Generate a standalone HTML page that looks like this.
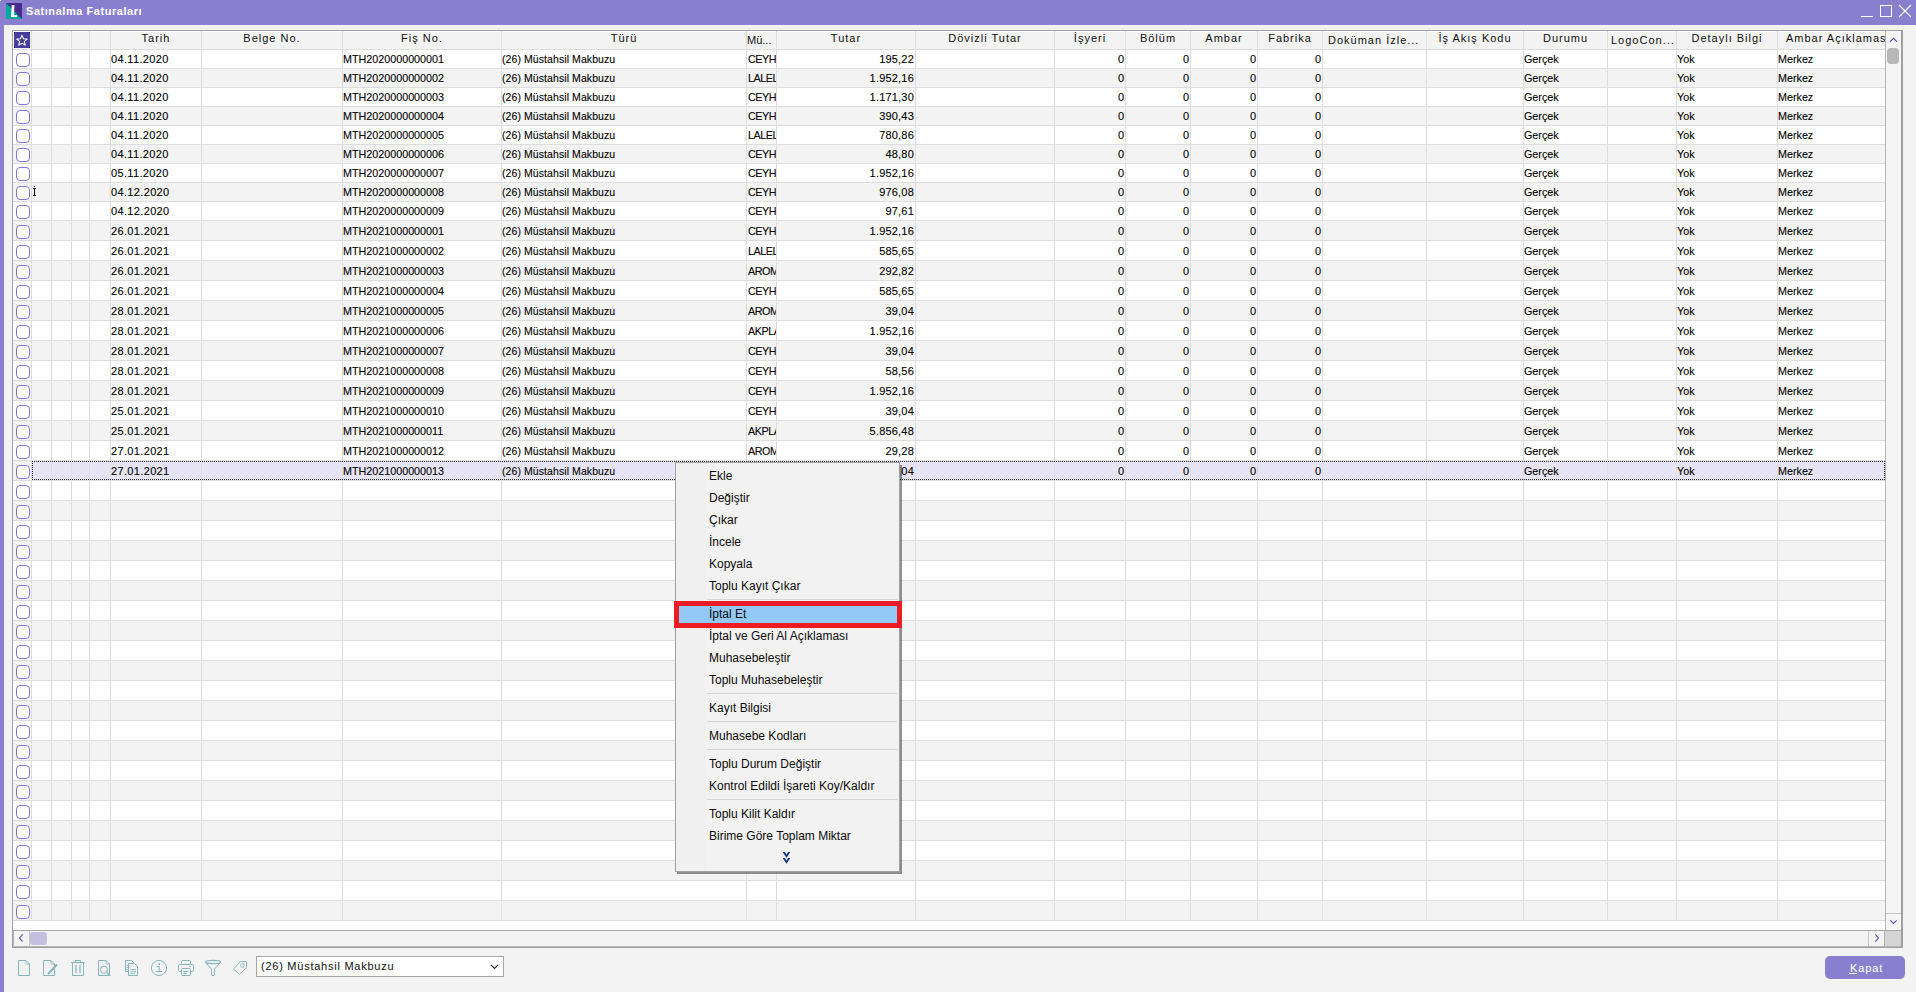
<!DOCTYPE html>
<html><head><meta charset="utf-8"><title>Satınalma Faturaları</title>
<style>
*{box-sizing:border-box;margin:0;padding:0}
html,body{width:1916px;height:992px;overflow:hidden}
body{position:relative;background:#F3F3F3;font-family:"Liberation Sans",sans-serif;color:#111}
.a{position:absolute}
.t{position:absolute;white-space:nowrap;font-size:10.75px;line-height:12px;color:#000;-webkit-text-stroke:0.1px #000}
.h{position:absolute;white-space:nowrap;font-size:11px;line-height:14px;letter-spacing:1px;color:#101010;text-align:center;top:31px}
.vl{position:absolute;width:1px;background:#DDDCE0}
.cb{position:absolute;left:16px;width:14px;height:14px;border:1px solid #8278D2;border-radius:4px;background:#fff}
.mi{position:absolute;left:33px;font-size:12px;line-height:14px;white-space:nowrap;color:#0A0A0A}
.sep{position:absolute;left:31px;width:190px;height:1px;background:#D5D5D5}
</style></head><body>

<div class="a" style="left:0;top:0;width:1916px;height:25px;background:#8A7FCF"></div>
<div class="a" style="left:0;top:0;width:4px;height:992px;background:#8A7FCF"></div>
<div class="a" style="left:0;top:0;width:1px;height:1px;background:#fff"></div>
<svg class="a" style="left:6px;top:3px" width="16" height="16" viewBox="0 0 16 16">
<rect width="16" height="16" fill="#47288F"/><polygon points="0,0 16,16 0,16" fill="#03A89C"/>
<path d="M5.7 2 H8.5 L8 12 H11 L10.9 14 H5 Z" fill="#fff"/></svg>
<div class="a" style="left:26px;top:4px;font-size:11px;letter-spacing:0.55px;line-height:14px;font-weight:bold;color:#fff;white-space:nowrap">Satınalma Faturaları</div>
<div class="a" style="left:1861px;top:16px;width:12px;height:1px;background:#fff"></div>
<div class="a" style="left:1880px;top:5px;width:12px;height:12px;border:1px solid #fff"></div>
<svg class="a" style="left:1898px;top:4px" width="14" height="14" viewBox="0 0 14 14"><path d="M1 1 L13 13 M13 1 L1 13" stroke="#fff" stroke-width="1.1"/></svg>
<div class="a" style="left:12px;top:30px;width:1891px;height:918px;border:1px solid #A0A0A0;border-right:2px solid #A0A0A0;border-bottom:2px solid #A0A0A0;background:#fff"></div>
<div class="a" style="left:13px;top:31px;width:1872px;height:899px;background:#fff"></div>
<div class="a" style="left:14px;top:32px;width:1871px;height:17px;background:#F3F3F3"></div>
<div class="a" style="left:13px;top:49px;width:1872px;height:1px;background:#DDDCE0"></div>
<div class="a" style="left:13px;top:50px;width:1872px;height:18px;background:#FFFFFF"></div>
<div class="a" style="left:13px;top:68px;width:1872px;height:1px;background:#DDDCE0"></div>
<div class="a" style="left:13px;top:69px;width:1872px;height:18px;background:#F3F3F3"></div>
<div class="a" style="left:13px;top:87px;width:1872px;height:1px;background:#DDDCE0"></div>
<div class="a" style="left:13px;top:88px;width:1872px;height:18px;background:#FFFFFF"></div>
<div class="a" style="left:13px;top:106px;width:1872px;height:1px;background:#DDDCE0"></div>
<div class="a" style="left:13px;top:107px;width:1872px;height:18px;background:#F3F3F3"></div>
<div class="a" style="left:13px;top:125px;width:1872px;height:1px;background:#DDDCE0"></div>
<div class="a" style="left:13px;top:126px;width:1872px;height:18px;background:#FFFFFF"></div>
<div class="a" style="left:13px;top:144px;width:1872px;height:1px;background:#DDDCE0"></div>
<div class="a" style="left:13px;top:145px;width:1872px;height:18px;background:#F3F3F3"></div>
<div class="a" style="left:13px;top:163px;width:1872px;height:1px;background:#DDDCE0"></div>
<div class="a" style="left:13px;top:164px;width:1872px;height:18px;background:#FFFFFF"></div>
<div class="a" style="left:13px;top:182px;width:1872px;height:1px;background:#DDDCE0"></div>
<div class="a" style="left:13px;top:183px;width:1872px;height:18px;background:#F3F3F3"></div>
<div class="a" style="left:13px;top:201px;width:1872px;height:1px;background:#DDDCE0"></div>
<div class="a" style="left:13px;top:202px;width:1872px;height:18px;background:#FFFFFF"></div>
<div class="a" style="left:13px;top:220px;width:1872px;height:1px;background:#DDDCE0"></div>
<div class="a" style="left:13px;top:221px;width:1872px;height:19px;background:#F3F3F3"></div>
<div class="a" style="left:13px;top:240px;width:1872px;height:1px;background:#DDDCE0"></div>
<div class="a" style="left:13px;top:241px;width:1872px;height:19px;background:#FFFFFF"></div>
<div class="a" style="left:13px;top:260px;width:1872px;height:1px;background:#DDDCE0"></div>
<div class="a" style="left:13px;top:261px;width:1872px;height:19px;background:#F3F3F3"></div>
<div class="a" style="left:13px;top:280px;width:1872px;height:1px;background:#DDDCE0"></div>
<div class="a" style="left:13px;top:281px;width:1872px;height:19px;background:#FFFFFF"></div>
<div class="a" style="left:13px;top:300px;width:1872px;height:1px;background:#DDDCE0"></div>
<div class="a" style="left:13px;top:301px;width:1872px;height:19px;background:#F3F3F3"></div>
<div class="a" style="left:13px;top:320px;width:1872px;height:1px;background:#DDDCE0"></div>
<div class="a" style="left:13px;top:321px;width:1872px;height:19px;background:#FFFFFF"></div>
<div class="a" style="left:13px;top:340px;width:1872px;height:1px;background:#DDDCE0"></div>
<div class="a" style="left:13px;top:341px;width:1872px;height:19px;background:#F3F3F3"></div>
<div class="a" style="left:13px;top:360px;width:1872px;height:1px;background:#DDDCE0"></div>
<div class="a" style="left:13px;top:361px;width:1872px;height:19px;background:#FFFFFF"></div>
<div class="a" style="left:13px;top:380px;width:1872px;height:1px;background:#DDDCE0"></div>
<div class="a" style="left:13px;top:381px;width:1872px;height:19px;background:#F3F3F3"></div>
<div class="a" style="left:13px;top:400px;width:1872px;height:1px;background:#DDDCE0"></div>
<div class="a" style="left:13px;top:401px;width:1872px;height:19px;background:#FFFFFF"></div>
<div class="a" style="left:13px;top:420px;width:1872px;height:1px;background:#DDDCE0"></div>
<div class="a" style="left:13px;top:421px;width:1872px;height:19px;background:#F3F3F3"></div>
<div class="a" style="left:13px;top:440px;width:1872px;height:1px;background:#DDDCE0"></div>
<div class="a" style="left:13px;top:441px;width:1872px;height:19px;background:#FFFFFF"></div>
<div class="a" style="left:13px;top:460px;width:1872px;height:1px;background:#DDDCE0"></div>
<div class="a" style="left:13px;top:461px;width:1872px;height:19px;background:#F3F3F3"></div>
<div class="a" style="left:13px;top:480px;width:1872px;height:1px;background:#DDDCE0"></div>
<div class="a" style="left:13px;top:481px;width:1872px;height:19px;background:#FFFFFF"></div>
<div class="a" style="left:13px;top:500px;width:1872px;height:1px;background:#DDDCE0"></div>
<div class="a" style="left:13px;top:501px;width:1872px;height:19px;background:#F3F3F3"></div>
<div class="a" style="left:13px;top:520px;width:1872px;height:1px;background:#DDDCE0"></div>
<div class="a" style="left:13px;top:521px;width:1872px;height:19px;background:#FFFFFF"></div>
<div class="a" style="left:13px;top:540px;width:1872px;height:1px;background:#DDDCE0"></div>
<div class="a" style="left:13px;top:541px;width:1872px;height:19px;background:#F3F3F3"></div>
<div class="a" style="left:13px;top:560px;width:1872px;height:1px;background:#DDDCE0"></div>
<div class="a" style="left:13px;top:561px;width:1872px;height:19px;background:#FFFFFF"></div>
<div class="a" style="left:13px;top:580px;width:1872px;height:1px;background:#DDDCE0"></div>
<div class="a" style="left:13px;top:581px;width:1872px;height:19px;background:#F3F3F3"></div>
<div class="a" style="left:13px;top:600px;width:1872px;height:1px;background:#DDDCE0"></div>
<div class="a" style="left:13px;top:601px;width:1872px;height:19px;background:#FFFFFF"></div>
<div class="a" style="left:13px;top:620px;width:1872px;height:1px;background:#DDDCE0"></div>
<div class="a" style="left:13px;top:621px;width:1872px;height:19px;background:#F3F3F3"></div>
<div class="a" style="left:13px;top:640px;width:1872px;height:1px;background:#DDDCE0"></div>
<div class="a" style="left:13px;top:641px;width:1872px;height:19px;background:#FFFFFF"></div>
<div class="a" style="left:13px;top:660px;width:1872px;height:1px;background:#DDDCE0"></div>
<div class="a" style="left:13px;top:661px;width:1872px;height:19px;background:#F3F3F3"></div>
<div class="a" style="left:13px;top:680px;width:1872px;height:1px;background:#DDDCE0"></div>
<div class="a" style="left:13px;top:681px;width:1872px;height:19px;background:#FFFFFF"></div>
<div class="a" style="left:13px;top:700px;width:1872px;height:1px;background:#DDDCE0"></div>
<div class="a" style="left:13px;top:701px;width:1872px;height:19px;background:#F3F3F3"></div>
<div class="a" style="left:13px;top:720px;width:1872px;height:1px;background:#DDDCE0"></div>
<div class="a" style="left:13px;top:721px;width:1872px;height:19px;background:#FFFFFF"></div>
<div class="a" style="left:13px;top:740px;width:1872px;height:1px;background:#DDDCE0"></div>
<div class="a" style="left:13px;top:741px;width:1872px;height:19px;background:#F3F3F3"></div>
<div class="a" style="left:13px;top:760px;width:1872px;height:1px;background:#DDDCE0"></div>
<div class="a" style="left:13px;top:761px;width:1872px;height:19px;background:#FFFFFF"></div>
<div class="a" style="left:13px;top:780px;width:1872px;height:1px;background:#DDDCE0"></div>
<div class="a" style="left:13px;top:781px;width:1872px;height:19px;background:#F3F3F3"></div>
<div class="a" style="left:13px;top:800px;width:1872px;height:1px;background:#DDDCE0"></div>
<div class="a" style="left:13px;top:801px;width:1872px;height:19px;background:#FFFFFF"></div>
<div class="a" style="left:13px;top:820px;width:1872px;height:1px;background:#DDDCE0"></div>
<div class="a" style="left:13px;top:821px;width:1872px;height:19px;background:#F3F3F3"></div>
<div class="a" style="left:13px;top:840px;width:1872px;height:1px;background:#DDDCE0"></div>
<div class="a" style="left:13px;top:841px;width:1872px;height:19px;background:#FFFFFF"></div>
<div class="a" style="left:13px;top:860px;width:1872px;height:1px;background:#DDDCE0"></div>
<div class="a" style="left:13px;top:861px;width:1872px;height:19px;background:#F3F3F3"></div>
<div class="a" style="left:13px;top:880px;width:1872px;height:1px;background:#DDDCE0"></div>
<div class="a" style="left:13px;top:881px;width:1872px;height:19px;background:#FFFFFF"></div>
<div class="a" style="left:13px;top:900px;width:1872px;height:1px;background:#DDDCE0"></div>
<div class="a" style="left:13px;top:901px;width:1872px;height:19px;background:#F3F3F3"></div>
<div class="a" style="left:13px;top:920px;width:1872px;height:1px;background:#DDDCE0"></div>
<div class="a" style="left:32px;top:461px;width:1853px;height:19px;background:#E7E5F5"></div>
<div class="vl" style="left:31px;top:31px;height:889px"></div>
<div class="vl" style="left:51px;top:31px;height:889px"></div>
<div class="vl" style="left:71px;top:31px;height:889px"></div>
<div class="vl" style="left:89px;top:31px;height:889px"></div>
<div class="vl" style="left:110px;top:31px;height:889px"></div>
<div class="vl" style="left:201px;top:31px;height:889px"></div>
<div class="vl" style="left:342px;top:31px;height:889px"></div>
<div class="vl" style="left:501px;top:31px;height:889px"></div>
<div class="vl" style="left:746px;top:31px;height:889px"></div>
<div class="vl" style="left:776px;top:31px;height:889px"></div>
<div class="vl" style="left:915px;top:31px;height:889px"></div>
<div class="vl" style="left:1054px;top:31px;height:889px"></div>
<div class="vl" style="left:1125px;top:31px;height:889px"></div>
<div class="vl" style="left:1190px;top:31px;height:889px"></div>
<div class="vl" style="left:1257px;top:31px;height:889px"></div>
<div class="vl" style="left:1322px;top:31px;height:889px"></div>
<div class="vl" style="left:1426px;top:31px;height:889px"></div>
<div class="vl" style="left:1523px;top:31px;height:889px"></div>
<div class="vl" style="left:1607px;top:31px;height:889px"></div>
<div class="vl" style="left:1676px;top:31px;height:889px"></div>
<div class="vl" style="left:1777px;top:31px;height:889px"></div>
<div class="a" style="left:32px;top:461px;width:1853px;height:19px;border:1px dotted #222"></div>
<div class="a" style="left:14px;top:32px;width:16px;height:16px;background:#4A3C9C"></div>
<svg class="a" style="left:14px;top:32px" width="16" height="16" viewBox="0 0 16 16"><path d="M8.00 3.20 L9.47 6.68 L13.23 7.00 L10.38 9.47 L11.23 13.15 L8.00 11.20 L4.77 13.15 L5.62 9.47 L2.77 7.00 L6.53 6.68 Z" fill="none" stroke="#fff" stroke-width="1.05" stroke-linejoin="round"/><rect x="0" y="0" width="1" height="1" fill="#000"/><rect x="15" y="0" width="1" height="1" fill="#000"/><rect x="0" y="15" width="1" height="1" fill="#000"/><rect x="15" y="15" width="1" height="1" fill="#000"/></svg>
<div class="cb" style="top:53px"></div>
<div class="cb" style="top:72px"></div>
<div class="cb" style="top:91px"></div>
<div class="cb" style="top:110px"></div>
<div class="cb" style="top:129px"></div>
<div class="cb" style="top:148px"></div>
<div class="cb" style="top:167px"></div>
<div class="cb" style="top:186px"></div>
<div class="cb" style="top:205px"></div>
<div class="cb" style="top:225px"></div>
<div class="cb" style="top:245px"></div>
<div class="cb" style="top:265px"></div>
<div class="cb" style="top:285px"></div>
<div class="cb" style="top:305px"></div>
<div class="cb" style="top:325px"></div>
<div class="cb" style="top:345px"></div>
<div class="cb" style="top:365px"></div>
<div class="cb" style="top:385px"></div>
<div class="cb" style="top:405px"></div>
<div class="cb" style="top:425px"></div>
<div class="cb" style="top:445px"></div>
<div class="cb" style="top:465px"></div>
<div class="cb" style="top:485px"></div>
<div class="cb" style="top:505px"></div>
<div class="cb" style="top:525px"></div>
<div class="cb" style="top:545px"></div>
<div class="cb" style="top:565px"></div>
<div class="cb" style="top:585px"></div>
<div class="cb" style="top:605px"></div>
<div class="cb" style="top:625px"></div>
<div class="cb" style="top:645px"></div>
<div class="cb" style="top:665px"></div>
<div class="cb" style="top:685px"></div>
<div class="cb" style="top:705px"></div>
<div class="cb" style="top:725px"></div>
<div class="cb" style="top:745px"></div>
<div class="cb" style="top:765px"></div>
<div class="cb" style="top:785px"></div>
<div class="cb" style="top:805px"></div>
<div class="cb" style="top:825px"></div>
<div class="cb" style="top:845px"></div>
<div class="cb" style="top:865px"></div>
<div class="cb" style="top:885px"></div>
<div class="cb" style="top:905px"></div>
<div class="h" style="left:111px;width:90px;">Tarih</div>
<div class="h" style="left:202px;width:140px;">Belge No.</div>
<div class="h" style="left:343px;width:158px;">Fiş No.</div>
<div class="h" style="left:502px;width:244px;">Türü</div>
<div class="h" style="left:747px;top:33px;text-align:left;letter-spacing:0">Mü...</div>
<div class="h" style="left:777px;width:138px;">Tutar</div>
<div class="h" style="left:916px;width:138px;">Dövizli Tutar</div>
<div class="h" style="left:1055px;width:70px;">İşyeri</div>
<div class="h" style="left:1126px;width:64px;">Bölüm</div>
<div class="h" style="left:1191px;width:66px;">Ambar</div>
<div class="h" style="left:1258px;width:64px;">Fabrika</div>
<div class="h" style="left:1328px;top:33px;text-align:left">Doküman İzle...</div>
<div class="h" style="left:1427px;width:96px;">İş Akış Kodu</div>
<div class="h" style="left:1524px;width:83px;">Durumu</div>
<div class="h" style="left:1611px;top:33px;text-align:left">LogoCon...</div>
<div class="h" style="left:1677px;width:100px;">Detaylı Bilgi</div>
<div class="a" style="left:1778px;top:31px;width:107px;height:18px;overflow:hidden"><div class="h" style="left:8px;top:0px;text-align:left">Ambar Açıklaması</div></div>
<div class="t" style="left:111px;top:53px;font-size:11px;letter-spacing:0.35px">04.11.2020</div>
<div class="t" style="left:343px;top:53px">MTH2020000000001</div>
<div class="t" style="left:502px;top:53px;font-size:10.5px;letter-spacing:0.08px">(26) Müstahsil Makbuzu</div>
<div class="a" style="left:747px;top:50px;width:29px;height:18px;overflow:hidden"><div class="t" style="left:1px;top:3px;letter-spacing:-0.45px">CEYH.</div></div>
<div class="t" style="left:777px;width:137px;text-align:right;top:53px;font-size:11px;letter-spacing:0.2px">195,22</div>
<div class="t" style="left:1055px;width:69px;text-align:right;top:53px;font-size:11px">0</div>
<div class="t" style="left:1126px;width:63px;text-align:right;top:53px;font-size:11px">0</div>
<div class="t" style="left:1191px;width:65px;text-align:right;top:53px;font-size:11px">0</div>
<div class="t" style="left:1258px;width:63px;text-align:right;top:53px;font-size:11px">0</div>
<div class="t" style="left:1524px;top:53px">Gerçek</div>
<div class="t" style="left:1677px;top:53px">Yok</div>
<div class="t" style="left:1778px;top:53px">Merkez</div>
<div class="t" style="left:111px;top:72px;font-size:11px;letter-spacing:0.35px">04.11.2020</div>
<div class="t" style="left:343px;top:72px">MTH2020000000002</div>
<div class="t" style="left:502px;top:72px;font-size:10.5px;letter-spacing:0.08px">(26) Müstahsil Makbuzu</div>
<div class="a" style="left:747px;top:69px;width:29px;height:18px;overflow:hidden"><div class="t" style="left:1px;top:3px;letter-spacing:-0.45px">LALEL</div></div>
<div class="t" style="left:777px;width:137px;text-align:right;top:72px;font-size:11px;letter-spacing:0.2px">1.952,16</div>
<div class="t" style="left:1055px;width:69px;text-align:right;top:72px;font-size:11px">0</div>
<div class="t" style="left:1126px;width:63px;text-align:right;top:72px;font-size:11px">0</div>
<div class="t" style="left:1191px;width:65px;text-align:right;top:72px;font-size:11px">0</div>
<div class="t" style="left:1258px;width:63px;text-align:right;top:72px;font-size:11px">0</div>
<div class="t" style="left:1524px;top:72px">Gerçek</div>
<div class="t" style="left:1677px;top:72px">Yok</div>
<div class="t" style="left:1778px;top:72px">Merkez</div>
<div class="t" style="left:111px;top:91px;font-size:11px;letter-spacing:0.35px">04.11.2020</div>
<div class="t" style="left:343px;top:91px">MTH2020000000003</div>
<div class="t" style="left:502px;top:91px;font-size:10.5px;letter-spacing:0.08px">(26) Müstahsil Makbuzu</div>
<div class="a" style="left:747px;top:88px;width:29px;height:18px;overflow:hidden"><div class="t" style="left:1px;top:3px;letter-spacing:-0.45px">CEYH.</div></div>
<div class="t" style="left:777px;width:137px;text-align:right;top:91px;font-size:11px;letter-spacing:0.2px">1.171,30</div>
<div class="t" style="left:1055px;width:69px;text-align:right;top:91px;font-size:11px">0</div>
<div class="t" style="left:1126px;width:63px;text-align:right;top:91px;font-size:11px">0</div>
<div class="t" style="left:1191px;width:65px;text-align:right;top:91px;font-size:11px">0</div>
<div class="t" style="left:1258px;width:63px;text-align:right;top:91px;font-size:11px">0</div>
<div class="t" style="left:1524px;top:91px">Gerçek</div>
<div class="t" style="left:1677px;top:91px">Yok</div>
<div class="t" style="left:1778px;top:91px">Merkez</div>
<div class="t" style="left:111px;top:110px;font-size:11px;letter-spacing:0.35px">04.11.2020</div>
<div class="t" style="left:343px;top:110px">MTH2020000000004</div>
<div class="t" style="left:502px;top:110px;font-size:10.5px;letter-spacing:0.08px">(26) Müstahsil Makbuzu</div>
<div class="a" style="left:747px;top:107px;width:29px;height:18px;overflow:hidden"><div class="t" style="left:1px;top:3px;letter-spacing:-0.45px">CEYH.</div></div>
<div class="t" style="left:777px;width:137px;text-align:right;top:110px;font-size:11px;letter-spacing:0.2px">390,43</div>
<div class="t" style="left:1055px;width:69px;text-align:right;top:110px;font-size:11px">0</div>
<div class="t" style="left:1126px;width:63px;text-align:right;top:110px;font-size:11px">0</div>
<div class="t" style="left:1191px;width:65px;text-align:right;top:110px;font-size:11px">0</div>
<div class="t" style="left:1258px;width:63px;text-align:right;top:110px;font-size:11px">0</div>
<div class="t" style="left:1524px;top:110px">Gerçek</div>
<div class="t" style="left:1677px;top:110px">Yok</div>
<div class="t" style="left:1778px;top:110px">Merkez</div>
<div class="t" style="left:111px;top:129px;font-size:11px;letter-spacing:0.35px">04.11.2020</div>
<div class="t" style="left:343px;top:129px">MTH2020000000005</div>
<div class="t" style="left:502px;top:129px;font-size:10.5px;letter-spacing:0.08px">(26) Müstahsil Makbuzu</div>
<div class="a" style="left:747px;top:126px;width:29px;height:18px;overflow:hidden"><div class="t" style="left:1px;top:3px;letter-spacing:-0.45px">LALEL</div></div>
<div class="t" style="left:777px;width:137px;text-align:right;top:129px;font-size:11px;letter-spacing:0.2px">780,86</div>
<div class="t" style="left:1055px;width:69px;text-align:right;top:129px;font-size:11px">0</div>
<div class="t" style="left:1126px;width:63px;text-align:right;top:129px;font-size:11px">0</div>
<div class="t" style="left:1191px;width:65px;text-align:right;top:129px;font-size:11px">0</div>
<div class="t" style="left:1258px;width:63px;text-align:right;top:129px;font-size:11px">0</div>
<div class="t" style="left:1524px;top:129px">Gerçek</div>
<div class="t" style="left:1677px;top:129px">Yok</div>
<div class="t" style="left:1778px;top:129px">Merkez</div>
<div class="t" style="left:111px;top:148px;font-size:11px;letter-spacing:0.35px">04.11.2020</div>
<div class="t" style="left:343px;top:148px">MTH2020000000006</div>
<div class="t" style="left:502px;top:148px;font-size:10.5px;letter-spacing:0.08px">(26) Müstahsil Makbuzu</div>
<div class="a" style="left:747px;top:145px;width:29px;height:18px;overflow:hidden"><div class="t" style="left:1px;top:3px;letter-spacing:-0.45px">CEYH.</div></div>
<div class="t" style="left:777px;width:137px;text-align:right;top:148px;font-size:11px;letter-spacing:0.2px">48,80</div>
<div class="t" style="left:1055px;width:69px;text-align:right;top:148px;font-size:11px">0</div>
<div class="t" style="left:1126px;width:63px;text-align:right;top:148px;font-size:11px">0</div>
<div class="t" style="left:1191px;width:65px;text-align:right;top:148px;font-size:11px">0</div>
<div class="t" style="left:1258px;width:63px;text-align:right;top:148px;font-size:11px">0</div>
<div class="t" style="left:1524px;top:148px">Gerçek</div>
<div class="t" style="left:1677px;top:148px">Yok</div>
<div class="t" style="left:1778px;top:148px">Merkez</div>
<div class="t" style="left:111px;top:167px;font-size:11px;letter-spacing:0.35px">05.11.2020</div>
<div class="t" style="left:343px;top:167px">MTH2020000000007</div>
<div class="t" style="left:502px;top:167px;font-size:10.5px;letter-spacing:0.08px">(26) Müstahsil Makbuzu</div>
<div class="a" style="left:747px;top:164px;width:29px;height:18px;overflow:hidden"><div class="t" style="left:1px;top:3px;letter-spacing:-0.45px">CEYH.</div></div>
<div class="t" style="left:777px;width:137px;text-align:right;top:167px;font-size:11px;letter-spacing:0.2px">1.952,16</div>
<div class="t" style="left:1055px;width:69px;text-align:right;top:167px;font-size:11px">0</div>
<div class="t" style="left:1126px;width:63px;text-align:right;top:167px;font-size:11px">0</div>
<div class="t" style="left:1191px;width:65px;text-align:right;top:167px;font-size:11px">0</div>
<div class="t" style="left:1258px;width:63px;text-align:right;top:167px;font-size:11px">0</div>
<div class="t" style="left:1524px;top:167px">Gerçek</div>
<div class="t" style="left:1677px;top:167px">Yok</div>
<div class="t" style="left:1778px;top:167px">Merkez</div>
<div class="t" style="left:111px;top:186px;font-size:11px;letter-spacing:0.35px">04.12.2020</div>
<div class="t" style="left:343px;top:186px">MTH2020000000008</div>
<div class="t" style="left:502px;top:186px;font-size:10.5px;letter-spacing:0.08px">(26) Müstahsil Makbuzu</div>
<div class="a" style="left:747px;top:183px;width:29px;height:18px;overflow:hidden"><div class="t" style="left:1px;top:3px;letter-spacing:-0.45px">CEYH.</div></div>
<div class="t" style="left:777px;width:137px;text-align:right;top:186px;font-size:11px;letter-spacing:0.2px">976,08</div>
<div class="t" style="left:1055px;width:69px;text-align:right;top:186px;font-size:11px">0</div>
<div class="t" style="left:1126px;width:63px;text-align:right;top:186px;font-size:11px">0</div>
<div class="t" style="left:1191px;width:65px;text-align:right;top:186px;font-size:11px">0</div>
<div class="t" style="left:1258px;width:63px;text-align:right;top:186px;font-size:11px">0</div>
<div class="t" style="left:1524px;top:186px">Gerçek</div>
<div class="t" style="left:1677px;top:186px">Yok</div>
<div class="t" style="left:1778px;top:186px">Merkez</div>
<div class="a" style="left:34px;top:186px;width:1px;height:1px;background:#111"></div><div class="a" style="left:33px;top:188px;width:3px;height:1px;background:#111"></div><div class="a" style="left:34px;top:189px;width:1px;height:6px;background:#111"></div><div class="a" style="left:33px;top:195px;width:3px;height:1px;background:#111"></div>
<div class="t" style="left:111px;top:205px;font-size:11px;letter-spacing:0.35px">04.12.2020</div>
<div class="t" style="left:343px;top:205px">MTH2020000000009</div>
<div class="t" style="left:502px;top:205px;font-size:10.5px;letter-spacing:0.08px">(26) Müstahsil Makbuzu</div>
<div class="a" style="left:747px;top:202px;width:29px;height:18px;overflow:hidden"><div class="t" style="left:1px;top:3px;letter-spacing:-0.45px">CEYH.</div></div>
<div class="t" style="left:777px;width:137px;text-align:right;top:205px;font-size:11px;letter-spacing:0.2px">97,61</div>
<div class="t" style="left:1055px;width:69px;text-align:right;top:205px;font-size:11px">0</div>
<div class="t" style="left:1126px;width:63px;text-align:right;top:205px;font-size:11px">0</div>
<div class="t" style="left:1191px;width:65px;text-align:right;top:205px;font-size:11px">0</div>
<div class="t" style="left:1258px;width:63px;text-align:right;top:205px;font-size:11px">0</div>
<div class="t" style="left:1524px;top:205px">Gerçek</div>
<div class="t" style="left:1677px;top:205px">Yok</div>
<div class="t" style="left:1778px;top:205px">Merkez</div>
<div class="t" style="left:111px;top:225px;font-size:11px;letter-spacing:0.35px">26.01.2021</div>
<div class="t" style="left:343px;top:225px">MTH2021000000001</div>
<div class="t" style="left:502px;top:225px;font-size:10.5px;letter-spacing:0.08px">(26) Müstahsil Makbuzu</div>
<div class="a" style="left:747px;top:221px;width:29px;height:19px;overflow:hidden"><div class="t" style="left:1px;top:4px;letter-spacing:-0.45px">CEYH.</div></div>
<div class="t" style="left:777px;width:137px;text-align:right;top:225px;font-size:11px;letter-spacing:0.2px">1.952,16</div>
<div class="t" style="left:1055px;width:69px;text-align:right;top:225px;font-size:11px">0</div>
<div class="t" style="left:1126px;width:63px;text-align:right;top:225px;font-size:11px">0</div>
<div class="t" style="left:1191px;width:65px;text-align:right;top:225px;font-size:11px">0</div>
<div class="t" style="left:1258px;width:63px;text-align:right;top:225px;font-size:11px">0</div>
<div class="t" style="left:1524px;top:225px">Gerçek</div>
<div class="t" style="left:1677px;top:225px">Yok</div>
<div class="t" style="left:1778px;top:225px">Merkez</div>
<div class="t" style="left:111px;top:245px;font-size:11px;letter-spacing:0.35px">26.01.2021</div>
<div class="t" style="left:343px;top:245px">MTH2021000000002</div>
<div class="t" style="left:502px;top:245px;font-size:10.5px;letter-spacing:0.08px">(26) Müstahsil Makbuzu</div>
<div class="a" style="left:747px;top:241px;width:29px;height:19px;overflow:hidden"><div class="t" style="left:1px;top:4px;letter-spacing:-0.45px">LALEL</div></div>
<div class="t" style="left:777px;width:137px;text-align:right;top:245px;font-size:11px;letter-spacing:0.2px">585,65</div>
<div class="t" style="left:1055px;width:69px;text-align:right;top:245px;font-size:11px">0</div>
<div class="t" style="left:1126px;width:63px;text-align:right;top:245px;font-size:11px">0</div>
<div class="t" style="left:1191px;width:65px;text-align:right;top:245px;font-size:11px">0</div>
<div class="t" style="left:1258px;width:63px;text-align:right;top:245px;font-size:11px">0</div>
<div class="t" style="left:1524px;top:245px">Gerçek</div>
<div class="t" style="left:1677px;top:245px">Yok</div>
<div class="t" style="left:1778px;top:245px">Merkez</div>
<div class="t" style="left:111px;top:265px;font-size:11px;letter-spacing:0.35px">26.01.2021</div>
<div class="t" style="left:343px;top:265px">MTH2021000000003</div>
<div class="t" style="left:502px;top:265px;font-size:10.5px;letter-spacing:0.08px">(26) Müstahsil Makbuzu</div>
<div class="a" style="left:747px;top:261px;width:29px;height:19px;overflow:hidden"><div class="t" style="left:1px;top:4px;letter-spacing:-0.45px">AROM</div></div>
<div class="t" style="left:777px;width:137px;text-align:right;top:265px;font-size:11px;letter-spacing:0.2px">292,82</div>
<div class="t" style="left:1055px;width:69px;text-align:right;top:265px;font-size:11px">0</div>
<div class="t" style="left:1126px;width:63px;text-align:right;top:265px;font-size:11px">0</div>
<div class="t" style="left:1191px;width:65px;text-align:right;top:265px;font-size:11px">0</div>
<div class="t" style="left:1258px;width:63px;text-align:right;top:265px;font-size:11px">0</div>
<div class="t" style="left:1524px;top:265px">Gerçek</div>
<div class="t" style="left:1677px;top:265px">Yok</div>
<div class="t" style="left:1778px;top:265px">Merkez</div>
<div class="t" style="left:111px;top:285px;font-size:11px;letter-spacing:0.35px">26.01.2021</div>
<div class="t" style="left:343px;top:285px">MTH2021000000004</div>
<div class="t" style="left:502px;top:285px;font-size:10.5px;letter-spacing:0.08px">(26) Müstahsil Makbuzu</div>
<div class="a" style="left:747px;top:281px;width:29px;height:19px;overflow:hidden"><div class="t" style="left:1px;top:4px;letter-spacing:-0.45px">CEYH.</div></div>
<div class="t" style="left:777px;width:137px;text-align:right;top:285px;font-size:11px;letter-spacing:0.2px">585,65</div>
<div class="t" style="left:1055px;width:69px;text-align:right;top:285px;font-size:11px">0</div>
<div class="t" style="left:1126px;width:63px;text-align:right;top:285px;font-size:11px">0</div>
<div class="t" style="left:1191px;width:65px;text-align:right;top:285px;font-size:11px">0</div>
<div class="t" style="left:1258px;width:63px;text-align:right;top:285px;font-size:11px">0</div>
<div class="t" style="left:1524px;top:285px">Gerçek</div>
<div class="t" style="left:1677px;top:285px">Yok</div>
<div class="t" style="left:1778px;top:285px">Merkez</div>
<div class="t" style="left:111px;top:305px;font-size:11px;letter-spacing:0.35px">28.01.2021</div>
<div class="t" style="left:343px;top:305px">MTH2021000000005</div>
<div class="t" style="left:502px;top:305px;font-size:10.5px;letter-spacing:0.08px">(26) Müstahsil Makbuzu</div>
<div class="a" style="left:747px;top:301px;width:29px;height:19px;overflow:hidden"><div class="t" style="left:1px;top:4px;letter-spacing:-0.45px">AROM</div></div>
<div class="t" style="left:777px;width:137px;text-align:right;top:305px;font-size:11px;letter-spacing:0.2px">39,04</div>
<div class="t" style="left:1055px;width:69px;text-align:right;top:305px;font-size:11px">0</div>
<div class="t" style="left:1126px;width:63px;text-align:right;top:305px;font-size:11px">0</div>
<div class="t" style="left:1191px;width:65px;text-align:right;top:305px;font-size:11px">0</div>
<div class="t" style="left:1258px;width:63px;text-align:right;top:305px;font-size:11px">0</div>
<div class="t" style="left:1524px;top:305px">Gerçek</div>
<div class="t" style="left:1677px;top:305px">Yok</div>
<div class="t" style="left:1778px;top:305px">Merkez</div>
<div class="t" style="left:111px;top:325px;font-size:11px;letter-spacing:0.35px">28.01.2021</div>
<div class="t" style="left:343px;top:325px">MTH2021000000006</div>
<div class="t" style="left:502px;top:325px;font-size:10.5px;letter-spacing:0.08px">(26) Müstahsil Makbuzu</div>
<div class="a" style="left:747px;top:321px;width:29px;height:19px;overflow:hidden"><div class="t" style="left:1px;top:4px;letter-spacing:-0.45px">AKPLA</div></div>
<div class="t" style="left:777px;width:137px;text-align:right;top:325px;font-size:11px;letter-spacing:0.2px">1.952,16</div>
<div class="t" style="left:1055px;width:69px;text-align:right;top:325px;font-size:11px">0</div>
<div class="t" style="left:1126px;width:63px;text-align:right;top:325px;font-size:11px">0</div>
<div class="t" style="left:1191px;width:65px;text-align:right;top:325px;font-size:11px">0</div>
<div class="t" style="left:1258px;width:63px;text-align:right;top:325px;font-size:11px">0</div>
<div class="t" style="left:1524px;top:325px">Gerçek</div>
<div class="t" style="left:1677px;top:325px">Yok</div>
<div class="t" style="left:1778px;top:325px">Merkez</div>
<div class="t" style="left:111px;top:345px;font-size:11px;letter-spacing:0.35px">28.01.2021</div>
<div class="t" style="left:343px;top:345px">MTH2021000000007</div>
<div class="t" style="left:502px;top:345px;font-size:10.5px;letter-spacing:0.08px">(26) Müstahsil Makbuzu</div>
<div class="a" style="left:747px;top:341px;width:29px;height:19px;overflow:hidden"><div class="t" style="left:1px;top:4px;letter-spacing:-0.45px">CEYH.</div></div>
<div class="t" style="left:777px;width:137px;text-align:right;top:345px;font-size:11px;letter-spacing:0.2px">39,04</div>
<div class="t" style="left:1055px;width:69px;text-align:right;top:345px;font-size:11px">0</div>
<div class="t" style="left:1126px;width:63px;text-align:right;top:345px;font-size:11px">0</div>
<div class="t" style="left:1191px;width:65px;text-align:right;top:345px;font-size:11px">0</div>
<div class="t" style="left:1258px;width:63px;text-align:right;top:345px;font-size:11px">0</div>
<div class="t" style="left:1524px;top:345px">Gerçek</div>
<div class="t" style="left:1677px;top:345px">Yok</div>
<div class="t" style="left:1778px;top:345px">Merkez</div>
<div class="t" style="left:111px;top:365px;font-size:11px;letter-spacing:0.35px">28.01.2021</div>
<div class="t" style="left:343px;top:365px">MTH2021000000008</div>
<div class="t" style="left:502px;top:365px;font-size:10.5px;letter-spacing:0.08px">(26) Müstahsil Makbuzu</div>
<div class="a" style="left:747px;top:361px;width:29px;height:19px;overflow:hidden"><div class="t" style="left:1px;top:4px;letter-spacing:-0.45px">CEYH.</div></div>
<div class="t" style="left:777px;width:137px;text-align:right;top:365px;font-size:11px;letter-spacing:0.2px">58,56</div>
<div class="t" style="left:1055px;width:69px;text-align:right;top:365px;font-size:11px">0</div>
<div class="t" style="left:1126px;width:63px;text-align:right;top:365px;font-size:11px">0</div>
<div class="t" style="left:1191px;width:65px;text-align:right;top:365px;font-size:11px">0</div>
<div class="t" style="left:1258px;width:63px;text-align:right;top:365px;font-size:11px">0</div>
<div class="t" style="left:1524px;top:365px">Gerçek</div>
<div class="t" style="left:1677px;top:365px">Yok</div>
<div class="t" style="left:1778px;top:365px">Merkez</div>
<div class="t" style="left:111px;top:385px;font-size:11px;letter-spacing:0.35px">28.01.2021</div>
<div class="t" style="left:343px;top:385px">MTH2021000000009</div>
<div class="t" style="left:502px;top:385px;font-size:10.5px;letter-spacing:0.08px">(26) Müstahsil Makbuzu</div>
<div class="a" style="left:747px;top:381px;width:29px;height:19px;overflow:hidden"><div class="t" style="left:1px;top:4px;letter-spacing:-0.45px">CEYH.</div></div>
<div class="t" style="left:777px;width:137px;text-align:right;top:385px;font-size:11px;letter-spacing:0.2px">1.952,16</div>
<div class="t" style="left:1055px;width:69px;text-align:right;top:385px;font-size:11px">0</div>
<div class="t" style="left:1126px;width:63px;text-align:right;top:385px;font-size:11px">0</div>
<div class="t" style="left:1191px;width:65px;text-align:right;top:385px;font-size:11px">0</div>
<div class="t" style="left:1258px;width:63px;text-align:right;top:385px;font-size:11px">0</div>
<div class="t" style="left:1524px;top:385px">Gerçek</div>
<div class="t" style="left:1677px;top:385px">Yok</div>
<div class="t" style="left:1778px;top:385px">Merkez</div>
<div class="t" style="left:111px;top:405px;font-size:11px;letter-spacing:0.35px">25.01.2021</div>
<div class="t" style="left:343px;top:405px">MTH2021000000010</div>
<div class="t" style="left:502px;top:405px;font-size:10.5px;letter-spacing:0.08px">(26) Müstahsil Makbuzu</div>
<div class="a" style="left:747px;top:401px;width:29px;height:19px;overflow:hidden"><div class="t" style="left:1px;top:4px;letter-spacing:-0.45px">CEYH.</div></div>
<div class="t" style="left:777px;width:137px;text-align:right;top:405px;font-size:11px;letter-spacing:0.2px">39,04</div>
<div class="t" style="left:1055px;width:69px;text-align:right;top:405px;font-size:11px">0</div>
<div class="t" style="left:1126px;width:63px;text-align:right;top:405px;font-size:11px">0</div>
<div class="t" style="left:1191px;width:65px;text-align:right;top:405px;font-size:11px">0</div>
<div class="t" style="left:1258px;width:63px;text-align:right;top:405px;font-size:11px">0</div>
<div class="t" style="left:1524px;top:405px">Gerçek</div>
<div class="t" style="left:1677px;top:405px">Yok</div>
<div class="t" style="left:1778px;top:405px">Merkez</div>
<div class="t" style="left:111px;top:425px;font-size:11px;letter-spacing:0.35px">25.01.2021</div>
<div class="t" style="left:343px;top:425px">MTH2021000000011</div>
<div class="t" style="left:502px;top:425px;font-size:10.5px;letter-spacing:0.08px">(26) Müstahsil Makbuzu</div>
<div class="a" style="left:747px;top:421px;width:29px;height:19px;overflow:hidden"><div class="t" style="left:1px;top:4px;letter-spacing:-0.45px">AKPLA</div></div>
<div class="t" style="left:777px;width:137px;text-align:right;top:425px;font-size:11px;letter-spacing:0.2px">5.856,48</div>
<div class="t" style="left:1055px;width:69px;text-align:right;top:425px;font-size:11px">0</div>
<div class="t" style="left:1126px;width:63px;text-align:right;top:425px;font-size:11px">0</div>
<div class="t" style="left:1191px;width:65px;text-align:right;top:425px;font-size:11px">0</div>
<div class="t" style="left:1258px;width:63px;text-align:right;top:425px;font-size:11px">0</div>
<div class="t" style="left:1524px;top:425px">Gerçek</div>
<div class="t" style="left:1677px;top:425px">Yok</div>
<div class="t" style="left:1778px;top:425px">Merkez</div>
<div class="t" style="left:111px;top:445px;font-size:11px;letter-spacing:0.35px">27.01.2021</div>
<div class="t" style="left:343px;top:445px">MTH2021000000012</div>
<div class="t" style="left:502px;top:445px;font-size:10.5px;letter-spacing:0.08px">(26) Müstahsil Makbuzu</div>
<div class="a" style="left:747px;top:441px;width:29px;height:19px;overflow:hidden"><div class="t" style="left:1px;top:4px;letter-spacing:-0.45px">AROM</div></div>
<div class="t" style="left:777px;width:137px;text-align:right;top:445px;font-size:11px;letter-spacing:0.2px">29,28</div>
<div class="t" style="left:1055px;width:69px;text-align:right;top:445px;font-size:11px">0</div>
<div class="t" style="left:1126px;width:63px;text-align:right;top:445px;font-size:11px">0</div>
<div class="t" style="left:1191px;width:65px;text-align:right;top:445px;font-size:11px">0</div>
<div class="t" style="left:1258px;width:63px;text-align:right;top:445px;font-size:11px">0</div>
<div class="t" style="left:1524px;top:445px">Gerçek</div>
<div class="t" style="left:1677px;top:445px">Yok</div>
<div class="t" style="left:1778px;top:445px">Merkez</div>
<div class="t" style="left:111px;top:465px;font-size:11px;letter-spacing:0.35px">27.01.2021</div>
<div class="t" style="left:343px;top:465px">MTH2021000000013</div>
<div class="t" style="left:502px;top:465px;font-size:10.5px;letter-spacing:0.08px">(26) Müstahsil Makbuzu</div>
<div class="a" style="left:747px;top:461px;width:29px;height:19px;overflow:hidden"><div class="t" style="left:1px;top:4px;letter-spacing:-0.45px">CEYH.</div></div>
<div class="t" style="left:777px;width:137px;text-align:right;top:465px;font-size:11px;letter-spacing:0.2px">39,04</div>
<div class="t" style="left:1055px;width:69px;text-align:right;top:465px;font-size:11px">0</div>
<div class="t" style="left:1126px;width:63px;text-align:right;top:465px;font-size:11px">0</div>
<div class="t" style="left:1191px;width:65px;text-align:right;top:465px;font-size:11px">0</div>
<div class="t" style="left:1258px;width:63px;text-align:right;top:465px;font-size:11px">0</div>
<div class="t" style="left:1524px;top:465px">Gerçek</div>
<div class="t" style="left:1677px;top:465px">Yok</div>
<div class="t" style="left:1778px;top:465px">Merkez</div>
<div class="a" style="left:1885px;top:31px;width:1px;height:899px;background:#B4B4B4"></div>
<div class="a" style="left:1886px;top:31px;width:15px;height:899px;background:#F5F5F5"></div>
<svg class="a" style="left:1886px;top:33px" width="15" height="12" viewBox="0 0 15 12"><path d="M4 8.8 L7.5 5.3 L11 8.8" fill="none" stroke="#5E50B8" stroke-width="1.15"/></svg>
<div class="a" style="left:1887px;top:48px;width:12px;height:16px;background:#B8B8B8;border-radius:4px"></div>
<div class="a" style="left:1886px;top:913px;width:15px;height:1px;background:#C8C8C8"></div>
<svg class="a" style="left:1886px;top:915px" width="15" height="12" viewBox="0 0 15 12"><path d="M4.3 5.3 L7.5 8.5 L10.7 5.3" fill="none" stroke="#5E50B8" stroke-width="1.15"/></svg>
<div class="a" style="left:13px;top:930px;width:1888px;height:1px;background:#A8A8A8"></div>
<div class="a" style="left:13px;top:931px;width:1872px;height:15px;background:#F3F3F3"></div>
<div class="a" style="left:29px;top:931px;width:1px;height:15px;background:#C8C8C8"></div>
<svg class="a" style="left:13px;top:931px" width="16" height="15" viewBox="0 0 16 15"><path d="M9.6 3.4 L6.6 7 L9.6 10.6" fill="none" stroke="#5E50B8" stroke-width="1.15"/></svg>
<div class="a" style="left:30px;top:932px;width:17px;height:13px;background:#C4BEE0;border-radius:3px"></div>
<div class="a" style="left:1868px;top:931px;width:1px;height:15px;background:#C8C8C8"></div>
<svg class="a" style="left:1869px;top:931px" width="16" height="15" viewBox="0 0 16 15"><path d="M6.4 3.4 L9.4 7 L6.4 10.6" fill="none" stroke="#5E50B8" stroke-width="1.15"/></svg>
<div class="a" style="left:1884px;top:931px;width:1px;height:15px;background:#B4B4B4"></div>
<div class="a" style="left:13px;top:931px;width:1px;height:15px;background:#B4B4B4"></div>
<div class="a" style="left:13px;top:946px;width:1888px;height:1px;background:#B4B4B4"></div>
<div class="a" style="left:1885px;top:931px;width:16px;height:15px;background:#D5D5D5"></div>
<svg class="a" style="left:17px;top:959px" width="18" height="18" viewBox="0 0 18 18" fill="none" stroke="#86B5BE" stroke-width="1"><path d="M1.5 1.5 H9 L12.5 5 V16.5 H1.5 Z"/><path d="M9 1.5 V5 H12.5" stroke-width="0.8"/></svg>
<svg class="a" style="left:42px;top:959px" width="18" height="18" viewBox="0 0 18 18" fill="none" stroke="#86B5BE" stroke-width="1"><path d="M1.5 1.5 H9 L12.5 5 V16.5 H1.5 Z"/><path d="M9 1.5 V5 H12.5" stroke-width="0.8"/><path d="M6 15 L15 5.5" stroke-width="2"/></svg>
<svg class="a" style="left:70px;top:959px" width="16" height="18" viewBox="0 0 16 18" fill="none" stroke="#86B5BE" stroke-width="1"><path d="M1 3.5 H15"/><path d="M5.5 3.5 V1.5 H10.5 V3.5"/><path d="M2.5 3.5 V16.5 H13.5 V3.5"/><path d="M6 6 V14 M10 6 V14" stroke-width="1.2"/></svg>
<svg class="a" style="left:97px;top:959px" width="18" height="18" viewBox="0 0 18 18" fill="none" stroke="#86B5BE" stroke-width="1"><path d="M1.5 1.5 H9 L12.5 5 V16.5 H1.5 Z"/><path d="M9 1.5 V5 H12.5" stroke-width="0.8"/><circle cx="7" cy="10.6" r="3.6"/><path d="M9.6 13.2 L13.2 16.8" stroke-width="1.2"/></svg>
<svg class="a" style="left:124px;top:959px" width="16" height="18" viewBox="0 0 16 18" fill="none" stroke="#86B5BE" stroke-width="1"><path d="M1.5 1.5 H7.5 L9.5 3.5 V12.5 H1.5 Z"/><path d="M2.5 6.5 H4 M2.5 8.5 H4 M2.5 10.5 H4" stroke-width="0.9"/><path d="M4.5 4.5 H10.5 L13.5 7.5 V16.5 H4.5 Z" fill="#F3F3F3"/><path d="M6.5 10.5 H12 M6.5 12.5 H12 M6.5 14.5 H11" stroke-width="0.9"/></svg>
<svg class="a" style="left:150px;top:959px" width="18" height="18" viewBox="0 0 18 18" fill="none" stroke="#86B5BE" stroke-width="1"><circle cx="9" cy="9" r="7.6"/><circle cx="9.2" cy="5" r="0.9" fill="#86B5BE" stroke="none"/><path d="M6.5 7.5 H9.2 V12.5 M5.8 12.5 H12.2"/></svg>
<svg class="a" style="left:177px;top:959px" width="18" height="18" viewBox="0 0 18 18" fill="none" stroke="#86B5BE" stroke-width="1"><rect x="4.5" y="1.5" width="9" height="4" rx="1"/><rect x="1.5" y="5.5" width="15" height="7" rx="1"/><rect x="4.5" y="9.5" width="9" height="7" rx="1" fill="#F3F3F3"/><path d="M6.5 12.5 H11.5 M6.5 14.5 H9.5" stroke-width="0.9"/><path d="M12.5 7.5 H14" stroke-width="0.9"/></svg>
<svg class="a" style="left:204px;top:959px" width="18" height="18" viewBox="0 0 18 18" fill="none" stroke="#86B5BE" stroke-width="1"><ellipse cx="9" cy="3" rx="7.5" ry="1.6" stroke-width="1.3"/><path d="M1.5 3.5 L7.5 10 V16 Q9 17.5 10.5 16 V10 L16.5 3.5"/></svg>
<svg class="a" style="left:232px;top:959px" width="18" height="18" viewBox="0 0 18 18" fill="none" stroke="#86B5BE" stroke-width="1"><path d="M1.5 10 L8.5 2.5 H14.5 V8.5 L7.5 15.5 Z" stroke-width="0.9"/><circle cx="10.5" cy="6.5" r="1.8" stroke-width="0.9"/></svg>
<div class="a" style="left:256px;top:956px;width:248px;height:21px;background:#fff;border:1px solid #A7A7A7"></div>
<div class="a" style="left:261px;top:959px;font-size:11px;letter-spacing:0.75px;line-height:14px;white-space:nowrap;color:#101010">(26) Müstahsil Makbuzu</div>
<svg class="a" style="left:489px;top:962px" width="11" height="9" viewBox="0 0 11 9"><path d="M2 3 L5.5 6.5 L9 3" fill="none" stroke="#333" stroke-width="1.1"/></svg>
<div class="a" style="left:1825px;top:956px;width:80px;height:23px;background:#8A7FCF;border-radius:5px"></div>
<div class="a" style="left:1850px;top:961px;font-size:11px;letter-spacing:0.9px;line-height:14px;color:#fff;white-space:nowrap">Kapat</div><div class="a" style="left:1849px;top:973px;width:8px;height:1px;background:#fff"></div>
<div class="a" style="left:677px;top:465px;width:225px;height:409px;background:rgba(0,0,0,0.42);filter:blur(0.6px)"></div>
<div class="a" style="left:675px;top:462px;width:225px;height:410px;background:#F2F2F2;border:1px solid #A0A0A0;overflow:hidden">
<div class="a" style="left:0;top:0;width:30px;height:408px;background:#F0F0F0"></div>
<div class="sep" style="top:136px"></div>
<div class="sep" style="top:230px"></div>
<div class="sep" style="top:258px"></div>
<div class="sep" style="top:286px"></div>
<div class="sep" style="top:336px"></div>
<div class="mi" style="top:6px">Ekle</div>
<div class="mi" style="top:28px">Değiştir</div>
<div class="mi" style="top:50px">Çıkar</div>
<div class="mi" style="top:72px">İncele</div>
<div class="mi" style="top:94px">Kopyala</div>
<div class="mi" style="top:116px">Toplu Kayıt Çıkar</div>
<div class="mi" style="top:144px">İptal Et</div>
<div class="mi" style="top:166px">İptal ve Geri Al Açıklaması</div>
<div class="mi" style="top:188px">Muhasebeleştir</div>
<div class="mi" style="top:210px">Toplu Muhasebeleştir</div>
<div class="mi" style="top:238px">Kayıt Bilgisi</div>
<div class="mi" style="top:266px">Muhasebe Kodları</div>
<div class="mi" style="top:294px">Toplu Durum Değiştir</div>
<div class="mi" style="top:316px">Kontrol Edildi İşareti Koy/Kaldır</div>
<div class="mi" style="top:344px">Toplu Kilit Kaldır</div>
<div class="mi" style="top:366px">Birime Göre Toplam Miktar</div>
<svg class="a" style="left:107px;top:389px" width="7" height="12" viewBox="0 0 7 12"><path d="M0 0 H2 L3.5 2.8 L5 0 H7 V0.6 L3.5 5.8 L0 0.6 Z M0 6 H2 L3.5 8.8 L5 6 H7 V6.6 L3.5 11.8 L0 6.6 Z" fill="#10307A"/></svg>
</div>
<div class="a" style="left:674px;top:601px;width:228px;height:27px;border:5px solid #ED1C24;background:#92C9F7"></div>
<div class="mi" style="left:709px;top:607px">İptal Et</div>
</body></html>
